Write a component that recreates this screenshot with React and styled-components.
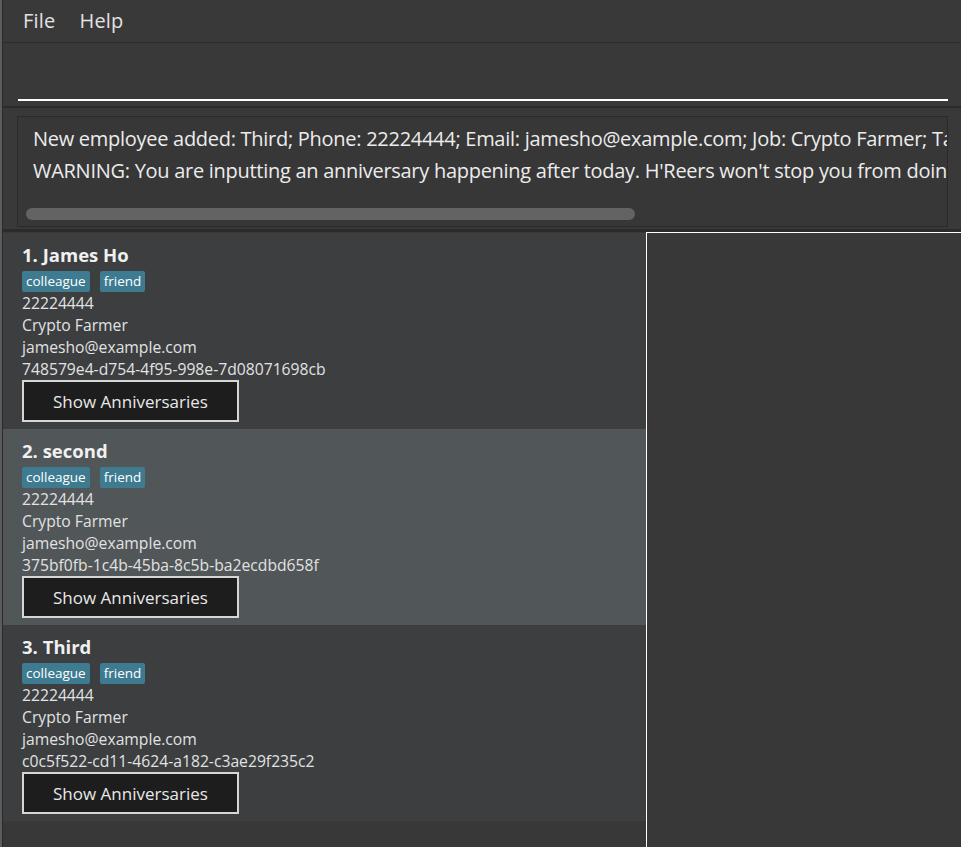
import styled, { createGlobalStyle } from "styled-components";

const GlobalStyle = createGlobalStyle`
  html, body {
    margin: 0;
    padding: 0;
    background: #383838;
    font-family: "Open Sans", "Noto Sans", sans-serif;
  }
`;

const people = [
  {
    name: "James Ho",
    phone: "22224444",
    job: "Crypto Farmer",
    email: "jamesho@example.com",
    id: "748579e4-d754-4f95-998e-7d08071698cb",
    tags: ["colleague", "friend"],
  },
  {
    name: "second",
    phone: "22224444",
    job: "Crypto Farmer",
    email: "jamesho@example.com",
    id: "375bf0fb-1c4b-45ba-8c5b-ba2ecdbd658f",
    tags: ["colleague", "friend"],
    selected: true,
  },
  {
    name: "Third",
    phone: "22224444",
    job: "Crypto Farmer",
    email: "jamesho@example.com",
    id: "c0c5f522-cd11-4624-a182-c3ae29f235c2",
    tags: ["colleague", "friend"],
  },
];

const App = () => {
  return (
    <Window>
      <GlobalStyle />
      <Frame>
        <MenuBar>
          <MenuItem>File</MenuItem>
          <MenuItem>Help</MenuItem>
        </MenuBar>
        <CommandArea>
          <CommandInput />
        </CommandArea>
        <ResultArea>
          <ResultBox>
            <ResultLine>
              New employee added: Third; Phone: 22224444; Email: jamesho@example.com; Job: Crypto Farmer; Tags: [colleague][friend]
            </ResultLine>
            <ResultLine>
              WARNING: You are inputting an anniversary happening after today. H'Reers won't stop you from doing this.
            </ResultLine>
            <ScrollThumb />
          </ResultBox>
        </ResultArea>
        <Main>
          <ListPanel>
            {people.map((p, i) => (
              <Card key={p.id} $selected={p.selected}>
                <Name>
                  {i + 1}. {p.name}
                </Name>
                <Tags>
                  {p.tags.map((t) => (
                    <Tag key={t}>{t}</Tag>
                  ))}
                </Tags>
                <Detail>{p.phone}</Detail>
                <Detail>{p.job}</Detail>
                <Detail>{p.email}</Detail>
                <Detail>{p.id}</Detail>
                <ShowButton>Show Anniversaries</ShowButton>
              </Card>
            ))}
          </ListPanel>
          <SidePanel />
        </Main>
      </Frame>
    </Window>
  );
};

const Window = styled.div`
  height: 100vh;
  display: flex;
  background: #383838;
  border-left: 2px solid #5c5c5c;
  overflow: hidden;
  color: #e6e6e6;
`;

const Frame = styled.div`
  flex: 1;
  display: flex;
  flex-direction: column;
  border-left: 1px solid #2a2a2a;
  min-width: 0;
`;

const MenuBar = styled.div`
  height: 42px;
  display: flex;
  align-items: center;
  gap: 24px;
  padding-left: 20px;
  background: #393939;
  border-bottom: 1px solid #2c2c2c;
`;

const MenuItem = styled.span`
  font-size: 20px;
  color: #e2e2e2;
  line-height: 1;
  margin-top: -1px;
  letter-spacing: 0.2px;
`;

const CommandArea = styled.div`
  height: 65px;
  display: flex;
  align-items: flex-end;
  padding: 0 13px 5px 15px;
  box-sizing: border-box;
  background: #393939;
  border-bottom: 2px solid #2b2b2b;
`;

const CommandInput = styled.div`
  flex: 1;
  border-bottom: 2px solid #ffffff;
`;

const ResultArea = styled.div`
  padding: 8px 13px 2px 14px;
  background: #393939;
  border-bottom: 3px solid #2b2b2b;
`;

const ResultBox = styled.div`
  background: #373737;
  border: 1px solid #2a2a2a;
  padding: 6px 0 6px 15px;
  overflow: hidden;
`;

const ResultLine = styled.div`
  font-size: 20px;
  line-height: 32px;
  letter-spacing: -0.28px;
  white-space: nowrap;
  color: #ececec;
`;

const ScrollThumb = styled.div`
  margin: 21px 0 0 -7px;
  width: 609px;
  height: 12px;
  border-radius: 6px;
  background: #636363;
`;

const Main = styled.div`
  flex: 1;
  display: flex;
  min-height: 0;
`;

const ListPanel = styled.div`
  width: 643px;
  display: flex;
  flex-direction: column;
  padding-top: 1px;
`;

const Card = styled.div`
  height: 196px;
  box-sizing: border-box;
  padding: 10px 19px 0;
  background: ${(p) => (p.$selected ? "#515658" : "#3c3e40")};
  display: flex;
  flex-direction: column;
  align-items: flex-start;
`;

const Name = styled.div`
  font-size: 18.5px;
  font-weight: 700;
  line-height: 24px;
  color: #f0f0f0;
`;

const Tags = styled.div`
  display: flex;
  gap: 10px;
  margin-top: 4px;
`;

const Tag = styled.span`
  background: #3e7b91;
  color: #ffffff;
  font-size: 13.5px;
  font-weight: 500;
  line-height: 21px;
  padding: 0 4px;
  border-radius: 2px;
`;

const Detail = styled.div`
  font-size: 15.7px;
  line-height: 22px;
  color: #e2e2e2;
`;

const ShowButton = styled.button`
  width: 217px;
  height: 42px;
  background: #1d1d1d;
  border: 2px solid #d6d6d6;
  color: #e8e8e8;
  font-family: "Open Sans", "Noto Sans", sans-serif;
  font-size: 17px;
  padding: 0;
  cursor: pointer;
`;

const SidePanel = styled.div`
  flex: 1;
  background: #383838;
  border-left: 1px solid #ffffff;
  border-top: 1px solid #ffffff;
`;

export default App;
